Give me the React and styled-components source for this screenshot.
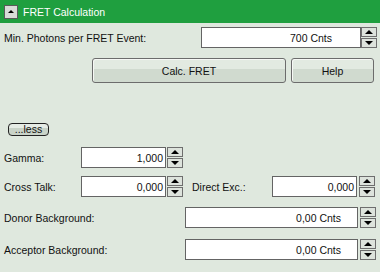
import React from "react";
import styled, { createGlobalStyle } from "styled-components";

const GlobalStyle = createGlobalStyle`
  html, body {
    margin: 0;
    padding: 0;
    background: #dfe8de;
  }
  body {
    font-family: "Liberation Sans", Arial, sans-serif;
    font-size: 10.5px;
    color: #111;
  }
`;

const Panel = styled.div`
  width: 380px;
  height: 272px;
  background: #dfe8de;
  display: flex;
  flex-direction: column;
  overflow: hidden;
`;

const Header = styled.div`
  height: 23px;
  background: #1f9f3f;
  display: flex;
  align-items: center;
  padding-left: 4px;
  gap: 5px;
  color: #fff;
  box-sizing: border-box;
`;

const CollapseButton = styled.div`
  width: 14px;
  height: 14px;
  box-sizing: border-box;
  background: #d8dcd8;
  border: 1px solid #5a5a5a;
  display: flex;
  align-items: center;
  justify-content: center;
`;

const Row = styled.div`
  display: flex;
  align-items: center;
  height: ${(p) => p.$h || 21}px;
  margin-top: ${(p) => p.$top}px;
  padding-left: ${(p) => (p.$left != null ? p.$left : 4)}px;
  padding-right: ${(p) => p.$right || 0}px;
`;

const Label = styled.div`
  width: ${(p) => (p.$w ? `${p.$w}px` : "auto")};
  flex: ${(p) => (p.$w ? "none" : 1)};
  margin-left: ${(p) => p.$ml || 0}px;
  white-space: nowrap;
`;

const InputBox = styled.div`
  width: ${(p) => p.$w}px;
  height: 21px;
  box-sizing: border-box;
  background: #fff;
  border: 1px solid #646464;
  display: flex;
  align-items: center;
  justify-content: flex-end;
  padding-right: ${(p) => p.$pad}px;
`;

const Spinner = styled.div`
  width: 16px;
  height: 21px;
  margin-left: ${(p) => p.$gap}px;
  display: flex;
  flex-direction: column;
  gap: 1px;
`;

const SpinHalf = styled.div`
  flex: 1;
  box-sizing: border-box;
  border: 1px solid #6e6e6e;
  background: #dde3dc;
  display: flex;
  align-items: center;
  justify-content: center;
`;

const Button = styled.div`
  width: ${(p) => p.$w}px;
  height: 25px;
  box-sizing: border-box;
  border: 1px solid #6c6c6c;
  border-radius: 3px;
  background: linear-gradient(#e2eae1 0 45%, #d0dacf 45% 100%);
  box-shadow: inset 1px 1px 0 #f6f8f5;
  display: flex;
  align-items: center;
  justify-content: center;
  margin-left: ${(p) => p.$ml || 0}px;
`;

const LessButton = styled.div`
  width: 41px;
  height: 13px;
  box-sizing: border-box;
  border: 1px solid #222;
  border-radius: 4px;
  background: linear-gradient(#e6ece5 0 40%, #c9d3c8 40% 100%);
  display: flex;
  align-items: center;
  justify-content: center;
  line-height: 1;
`;

function Arrow({ up }) {
  return (
    <svg width="8" height="4" viewBox="0 0 8 4">
      {up ? <polygon points="0,4 8,4 4,0" fill="#000" /> : <polygon points="0,0 8,0 4,4" fill="#000" />}
    </svg>
  );
}

function Field({ value, width, pad = 3, gap = 1 }) {
  return (
    <>
      <InputBox $w={width} $pad={pad}>{value}</InputBox>
      <Spinner $gap={gap}>
        <SpinHalf><Arrow up /></SpinHalf>
        <SpinHalf><Arrow /></SpinHalf>
      </Spinner>
    </>
  );
}

export default function App() {
  return (
    <Panel>
      <GlobalStyle />
      <Header>
        <CollapseButton>
          <svg width="6" height="3" viewBox="0 0 6 3">
            <polygon points="0,3 6,3 3,0" fill="#000" />
          </svg>
        </CollapseButton>
        FRET Calculation
      </Header>

      <Row $top={4} $right={3}>
        <Label>Min. Photons per FRET Event:</Label>
        <Field value="700 Cnts" width={160} pad={28} gap={0} />
      </Row>

      <Row $top={10} $h={25} $left={92}>
        <Button $w={194}>Calc. FRET</Button>
        <Button $w={83} $ml={5}>Help</Button>
      </Row>

      <Row $top={40} $h={13} $left={8}>
        <LessButton>...less</LessButton>
      </Row>

      <Row $top={11}>
        <Label $w={77}>Gamma:</Label>
        <Field value="1,000" width={85} pad={2} />
      </Row>

      <Row $top={8}>
        <Label $w={77}>Cross Talk:</Label>
        <Field value="0,000" width={85} pad={2} />
        <Label $w={80} $ml={9}>Direct Exc.:</Label>
        <Field value="0,000" width={85} pad={2} gap={2} />
      </Row>

      <Row $top={10} $right={4}>
        <Label>Donor Background:</Label>
        <Field value="0,00 Cnts" width={173} pad={16} gap={2} />
      </Row>

      <Row $top={11} $right={4}>
        <Label>Acceptor Background:</Label>
        <Field value="0,00 Cnts" width={173} pad={16} gap={2} />
      </Row>
    </Panel>
  );
}
